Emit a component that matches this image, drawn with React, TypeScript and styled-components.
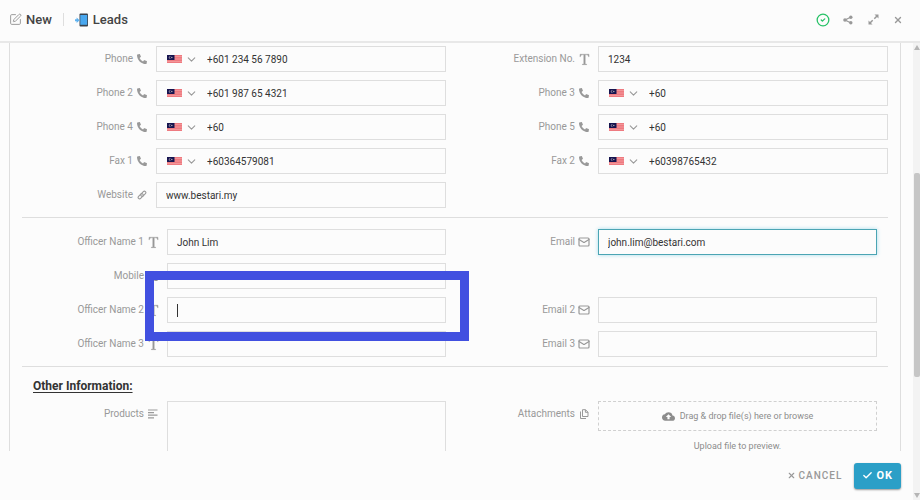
import React, { useId } from "react";
import styled, { createGlobalStyle, css } from "styled-components";
import { SquarePen, CircleCheck, ChevronDown, Mail, X, Check } from "lucide-react";
import { BsFonts } from "react-icons/bs";
import { FaPhoneAlt } from "react-icons/fa";
import { MdCloudUpload } from "react-icons/md";

const GlobalStyle = createGlobalStyle`
  *, *::before, *::after { box-sizing: border-box; }
  body { margin: 0; background: #fcfcfc; }
  body, button, input, textarea { font-family: Roboto, "Liberation Sans", sans-serif; }
`;

const line = "#dedede";
const muted = "#999";

const Dialog = styled.div`
  display: flex;
  flex-direction: column;
  height: 100vh;
  overflow: hidden;
  background: #fcfcfc;
  color: #444;
  font-size: 10px;
  line-height: 16px;
`;

const Header = styled.header`
  display: flex;
  align-items: center;
  justify-content: space-between;
  flex: none;
  height: 43px;
  padding: 0 14px 2px 9px;
  border-bottom: 2px solid #e8e8e8;
`;

const Breadcrumb = styled.div`
  display: flex;
  align-items: center;
`;

const Crumb = styled.h1`
  display: flex;
  align-items: center;
  gap: 4px;
  margin: 0;
  font-size: 13px;
  font-weight: 500;
  line-height: 18px;

  svg { color: ${muted}; }
`;

const CrumbDivider = styled.span`
  width: 1px;
  height: 13px;
  margin: 0 11px;
  background: ${line};
`;

const HeaderActions = styled.div`
  display: flex;
  gap: 9px;
`;

const IconButton = styled.button<{ $color?: string }>`
  display: grid;
  place-items: center;
  width: 16px;
  height: 16px;
  padding: 0;
  border: 0;
  background: none;
  color: ${(p) => p.$color ?? muted};
  cursor: pointer;
`;

const Main = styled.div`
  display: flex;
  flex: 1;
  min-height: 0;
`;

const Column = styled.div`
  display: flex;
  flex-direction: column;
  flex: 1;
  min-width: 0;
`;

const Viewport = styled.main`
  flex: 1;
  min-height: 0;
  padding: 0 12px 0 9px;
  overflow: hidden;
`;

const Panel = styled.div`
  padding: 3px 12px 24px;
  border: solid ${line};
  border-width: 0 1px;
`;

const Section = styled.section<{ $inset?: boolean }>`
  display: grid;
  grid-template-columns: minmax(0, 1fr) minmax(0, 1fr);
  gap: 8px 18px;
  ${(p) => p.$inset && css`padding: 0 11px;`}
`;

const Divider = styled.hr`
  height: 1px;
  margin: 9px 0 11px;
  border: 0;
  background: ${line};
`;

const SectionTitle = styled.h2`
  margin: 0 11px 7px;
  color: #333;
  font-size: 12px;
  font-weight: 700;
  line-height: 16px;
  text-decoration: underline;
  text-underline-offset: 2px;
`;

const Field = styled.div<{ $column?: number }>`
  position: relative;
  display: grid;
  grid-template-columns: 134px minmax(0, 1fr);
  align-items: start;
  ${(p) => p.$column && css`grid-column: ${p.$column};`}
`;

const Label = styled.label`
  display: flex;
  align-items: center;
  justify-content: flex-end;
  gap: 3px;
  height: 26px;
  padding-right: 8px;
  color: ${muted};
  white-space: nowrap;
`;

const LabelIcon = styled.span`
  display: flex;
  align-items: center;
  justify-content: center;
  width: 12px;
  height: 12px;

  svg { flex: none; }
`;

const Control = styled.div<{ $active?: boolean }>`
  position: relative;
  display: flex;
  align-items: center;
  height: 26px;
  border: 1px solid ${line};
  ${(p) =>
    p.$active &&
    css`
      border-color: #4ba5b4;
      box-shadow: 0 0 4px #a5dcec;
    `}
`;

const TextInput = styled.input`
  flex: 1;
  min-width: 0;
  height: 24px;
  padding: 0 9px;
  border: 0;
  outline: 0;
  background: none;
  color: #333;
  font-size: 10px;
`;

const CountryButton = styled.button`
  display: flex;
  align-items: center;
  gap: 3px;
  padding: 0 0 0 10px;
  border: 0;
  background: none;
  color: ${muted};
`;

const Caret = styled.span`
  position: absolute;
  left: 9px;
  top: 6px;
  width: 1px;
  height: 13px;
  background: #333;
`;

const Highlight = styled.div`
  position: absolute;
  inset: -26px -23px -18px 112px;
  border: 9px solid #4150e0;
  pointer-events: none;
  z-index: 2;
`;

const TextArea = styled.textarea`
  display: block;
  width: 100%;
  height: 80px;
  padding: 6px 9px;
  border: 1px solid ${line};
  outline: 0;
  background: none;
  font-size: 10px;
  resize: none;
`;

const Upload = styled.div`
  color: #8c8c8c;
  font-size: 9px;
  text-align: center;
`;

const DropZone = styled.button`
  display: flex;
  align-items: center;
  justify-content: center;
  gap: 5px;
  width: 100%;
  height: 30px;
  border: 1px dashed #d0d0d0;
  background: none;
  color: #8c8c8c;
  font-size: 9px;
`;

const UploadHint = styled.p`
  margin: 10px 0 0;
  line-height: 10px;
`;

const Footer = styled.footer`
  display: flex;
  align-items: center;
  justify-content: flex-end;
  gap: 12px;
  flex: none;
  height: 49px;
  padding: 0 12px;
`;

const ActionButton = styled.button<{ $primary?: boolean }>`
  display: flex;
  align-items: center;
  gap: 3px;
  height: 26px;
  padding: 0;
  border: 0;
  background: none;
  color: ${muted};
  font-size: 10px;
  font-weight: 500;
  letter-spacing: 1px;
  ${(p) =>
    p.$primary &&
    css`
      padding: 0 8px;
      border-radius: 3px;
      background: #2b9fc7;
      box-shadow: 0 1px 2px rgba(0, 0, 0, 0.4);
      color: #fff;
      font-size: 11px;
      font-weight: 700;
    `}
`;

const ScrollTrack = styled.div`
  display: flex;
  flex-direction: column;
  align-items: center;
  width: 7px;
  padding: 2px 0;
  background: #f3f3f3;
`;

const ScrollArrow = styled.span<{ $down?: boolean }>`
  border: 3px solid transparent;
  border-top-width: ${(p) => (p.$down ? "5px" : "0")};
  border-bottom-width: ${(p) => (p.$down ? "0" : "5px")};
  border-${(p) => (p.$down ? "top" : "bottom")}-color: #b5b5b5;
`;

const ScrollSpace = styled.span<{ $grow: number }>`
  flex: ${(p) => p.$grow};
`;

const ScrollThumb = styled.span`
  flex: 204;
  width: 6px;
  border-radius: 2px;
  background: #c6c6c6;
`;

const FlagIcon = () => (
  <svg width="15" height="8" viewBox="0 0 15 8" aria-hidden="true">
    <rect width="15" height="8" fill="#ee7a80" />
    <path d="M0 6.5h15M7 1.5h8M7 4h8" stroke="#f6a9aa" strokeWidth="0.6" />
    <rect width="7.5" height="5" fill="#16144f" />
    <circle cx="3" cy="2.5" r="1.2" fill="#9b93a8" />
    <circle cx="3.5" cy="2.5" r="0.9" fill="#16144f" />
    <circle cx="4.8" cy="2.5" r="0.7" fill="#b8aeb2" />
  </svg>
);

const LeadsIcon = () => (
  <svg width="14" height="14" viewBox="0 0 14 14" aria-hidden="true">
    <rect x="4.5" y="0.5" width="8.500" height="13" rx="1" fill="#39434e" />
    <rect x="5.300" y="2" width="6.900" height="9.800" fill="#48a7ef" />
    <path d="M0 6.200h1.600V4.400L4.600 7.200 1.600 10V8.200H0z" fill="#5db2f1" />
  </svg>
);

const ShareIcon = () => (
  <svg width="10" height="10" viewBox="0 0 10 10" aria-hidden="true">
    <path d="M2 5l6-3M2 5l6 3" stroke="currentColor" strokeWidth="1.200" />
    <circle cx="2" cy="5" r="1.800" fill="currentColor" />
    <circle cx="7.800" cy="2.200" r="1.700" fill="currentColor" />
    <circle cx="7.800" cy="7.800" r="1.700" fill="currentColor" />
  </svg>
);

const ExpandIcon = () => (
  <svg width="11" height="11" viewBox="0 0 11 11" aria-hidden="true">
    <path d="M6.500.5h4v4zM.5 6.500v4h4z" fill="currentColor" />
    <path d="M6.300 4.700L9 2M4.700 6.300L2 9" stroke="currentColor" strokeWidth="1.500" />
  </svg>
);

const LinesIcon = () => (
  <svg width="10" height="10" viewBox="0 0 10 10" aria-hidden="true">
    <path d="M0 1h9.500M0 3.600h6M0 6.200h9.500M0 8.800h6" stroke="currentColor" strokeWidth="1.200" />
  </svg>
);

const LinkIcon = () => (
  <svg width="10" height="10" viewBox="0 0 11 11" fill="none" stroke="currentColor" strokeWidth="1.200" aria-hidden="true">
    <rect x="4.200" y="3.900" width="6.600" height="3.200" rx="1.600" transform="rotate(-45 5.500 5.500)" />
    <rect x="0.200" y="3.900" width="6.600" height="3.200" rx="1.600" transform="rotate(-45 5.500 5.500)" />
  </svg>
);

const FilesIcon = () => (
  <svg width="10" height="10" viewBox="0 0 10 10" fill="none" stroke="currentColor" strokeLinejoin="round" aria-hidden="true">
    <path d="M3.500.7h3L9 3.200v4.300H3.500zM6.400.7v2.600H9" />
    <path d="M1.500 2.500v7h5.500" />
  </svg>
);

const icons = {
  phone: <FaPhoneAlt size={10} />,
  text: <BsFonts size={17} stroke="currentColor" strokeWidth={0.3} />,
  link: <LinkIcon />,
  mail: <Mail size={12} strokeWidth={2.4} />,
  lines: <LinesIcon />,
  files: <FilesIcon />,
};

interface FieldProps {
  label: string;
  icon: keyof typeof icons;
  value?: string;
  country?: boolean;
  active?: boolean;
  highlighted?: boolean;
  column?: number;
}

function FormField({ label, icon, value = "", country, active, highlighted, column }: FieldProps) {
  const id = useId();
  return (
    <Field $column={column}>
      <Label htmlFor={id}>
        {label}
        <LabelIcon>{icons[icon]}</LabelIcon>
      </Label>
      <Control $active={active}>
        {country && (
          <CountryButton type="button" aria-label={`${label} country`}>
            <FlagIcon />
            <ChevronDown size={13} strokeWidth={2} />
          </CountryButton>
        )}
        <TextInput id={id} defaultValue={value} />
        {highlighted && <Caret />}
      </Control>
      {highlighted && <Highlight />}
    </Field>
  );
}

export default function App() {
  return (
    <>
      <GlobalStyle />
      <Dialog role="dialog" aria-label="New lead">
        <Header>
          <Breadcrumb>
            <Crumb><SquarePen size={13} strokeWidth={1.8} />New</Crumb>
            <CrumbDivider />
            <Crumb><LeadsIcon />Leads</Crumb>
          </Breadcrumb>
          <HeaderActions>
            <IconButton aria-label="Saved" $color="#27c267"><CircleCheck size={14} strokeWidth={2.2} /></IconButton>
            <IconButton aria-label="Share"><ShareIcon /></IconButton>
            <IconButton aria-label="Expand"><ExpandIcon /></IconButton>
            <IconButton aria-label="Close"><X size={10} strokeWidth={3.2} /></IconButton>
          </HeaderActions>
        </Header>
        <Main>
          <Column>
            <Viewport>
              <Panel>
                <Section>
                  <FormField label="Phone" icon="phone" country value="+601 234 56 7890" />
                  <FormField label="Extension No." icon="text" value="1234" />
                  <FormField label="Phone 2" icon="phone" country value="+601 987 65 4321" />
                  <FormField label="Phone 3" icon="phone" country value="+60" />
                  <FormField label="Phone 4" icon="phone" country value="+60" />
                  <FormField label="Phone 5" icon="phone" country value="+60" />
                  <FormField label="Fax 1" icon="phone" country value="+60364579081" />
                  <FormField label="Fax 2" icon="phone" country value="+60398765432" />
                  <FormField label="Website" icon="link" value="www.bestari.my" />
                </Section>
                <Divider />
                <Section $inset>
                  <FormField label="Officer Name 1" icon="text" value="John Lim" />
                  <FormField label="Email" icon="mail" value="john.lim@bestari.com" active />
                  <FormField label="Mobile" icon="phone" country column={1} />
                  <FormField label="Officer Name 2" icon="text" highlighted column={1} />
                  <FormField label="Email 2" icon="mail" />
                  <FormField label="Officer Name 3" icon="text" />
                  <FormField label="Email 3" icon="mail" />
                </Section>
                <Divider />
                <SectionTitle>Other Information:</SectionTitle>
                <Section $inset>
                  <Field>
                    <Label htmlFor="products">
                      Products
                      <LabelIcon>{icons.lines}</LabelIcon>
                    </Label>
                    <TextArea id="products" />
                  </Field>
                  <Field>
                    <Label htmlFor="attachments">
                      Attachments
                      <LabelIcon>{icons.files}</LabelIcon>
                    </Label>
                    <Upload>
                      <DropZone id="attachments" type="button">
                        <MdCloudUpload size={13} />
                        Drag &amp; drop file(s) here or browse
                      </DropZone>
                      <UploadHint>Upload file to preview.</UploadHint>
                    </Upload>
                  </Field>
                </Section>
              </Panel>
            </Viewport>
            <Footer>
              <ActionButton type="button"><X size={9} strokeWidth={3} />CANCEL</ActionButton>
              <ActionButton type="button" $primary><Check size={11} strokeWidth={3} />OK</ActionButton>
            </Footer>
          </Column>
          <ScrollTrack aria-hidden="true">
            <ScrollArrow />
            <ScrollSpace $grow={122} />
            <ScrollThumb />
            <ScrollSpace $grow={115} />
            <ScrollArrow $down />
          </ScrollTrack>
        </Main>
      </Dialog>
    </>
  );
}
